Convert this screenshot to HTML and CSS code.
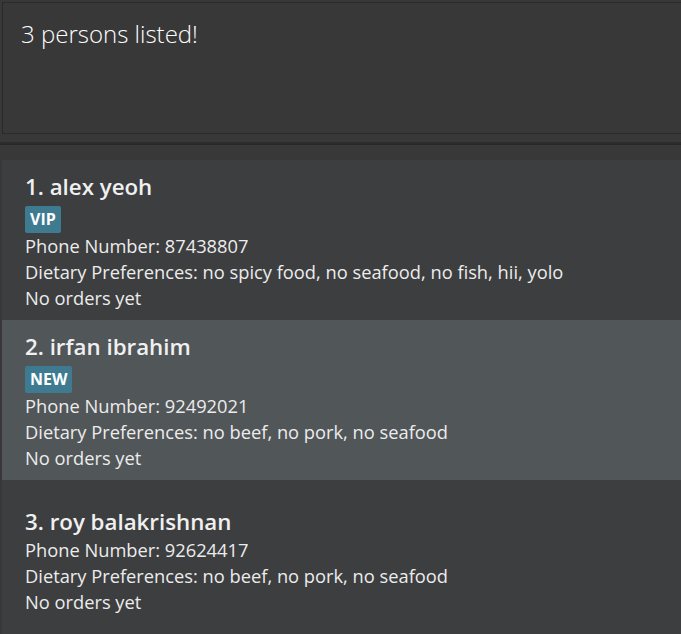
FILE: index.html
```html
<!DOCTYPE html>
<html>
<head>
<meta charset="utf-8">
<link rel="stylesheet" href="styles.css">
</head>
<body>
<div class="app">
  <div class="result-pane">
    <div class="result-box">3 persons listed!</div>
  </div>
  <div class="divider"></div>
  <div class="list">
    <div class="card even">
      <div class="name">1. alex yeoh</div>
      <div class="tags"><span class="tag">VIP</span></div>
      <div class="line">Phone Number: 87438807</div>
      <div class="line">Dietary Preferences: no spicy food, no seafood, no fish, hii, yolo</div>
      <div class="line">No orders yet</div>
    </div>
    <div class="card odd">
      <div class="name">2. irfan ibrahim</div>
      <div class="tags"><span class="tag">NEW</span></div>
      <div class="line">Phone Number: 92492021</div>
      <div class="line">Dietary Preferences: no beef, no pork, no seafood</div>
      <div class="line">No orders yet</div>
    </div>
    <div class="card even">
      <div class="name">3. roy balakrishnan</div>
      <div class="line">Phone Number: 92624417</div>
      <div class="line">Dietary Preferences: no beef, no pork, no seafood</div>
      <div class="line">No orders yet</div>
    </div>
  </div>
</div>
</body>
</html>
```

FILE: styles.css
```css
html, body {
  margin: 0;
  padding: 0;
  background: #383838;
  overflow: hidden;
}
.app {
  width: 681px;
  height: 634px;
  display: flex;
  flex-direction: column;
  font-family: "Open Sans", "Noto Sans", sans-serif;
  color: #f2f2f2;
}
.app > * {
  flex: none;
}
.result-pane {
  padding: 2px 0 0 2px;
}
.result-box {
  height: 132px;
  border: 1px solid #2a2a2a;
  border-right: none;
  background: #383838;
  padding: 15px 0 0 18px;
  box-sizing: border-box;
  font-size: 24px;
  font-weight: 300;
  color: #ffffff;
  line-height: 32px;
}
.divider {
  margin-top: 8px;
  height: 3px;
  background: linear-gradient(#2e2e2e, #262626);
}
.list {
  margin-top: 15px;
  padding-left: 2px;
  display: flex;
  flex-direction: column;
}
.card {
  height: 160px;
  flex: none;
  box-sizing: border-box;
  padding-left: 23px;
  padding-top: 2px;
  display: flex;
  flex-direction: column;
  justify-content: center;
}
.card.even { background: #3c3e3f; }
.card.odd { background: #515658; }
.name {
  font-size: 22.3px;
  font-weight: 600;
  line-height: 30px;
  color: #f0f0f0;
}
.tags {
  margin-top: 4px;
  display: flex;
}
.tag {
  background: #3e7b91;
  color: #ffffff;
  font-size: 16px;
  font-weight: 700;
  line-height: 27px;
  height: 27px;
  padding: 0 5px;
  border-radius: 2px;
}
.line {
  font-size: 18.3px;
  line-height: 26px;
  color: #ececec;
  white-space: nowrap;
}
```
